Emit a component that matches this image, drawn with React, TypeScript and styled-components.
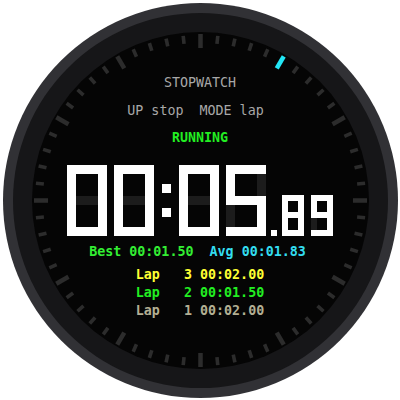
import React from 'react';
import styled, { createGlobalStyle } from 'styled-components';

const GlobalStyle = createGlobalStyle`
  html, body {
    margin: 0;
    padding: 0;
    background: #ffffff;
  }
  body {
    font-family: "DejaVu Sans Mono", "Liberation Mono", monospace;
  }
`;

const SEGMENTS: Record<string, string> = {
  '0': 'abcdef',
  '1': 'bc',
  '2': 'abdeg',
  '3': 'abcdg',
  '4': 'bcfg',
  '5': 'acdfg',
  '6': 'acdefg',
  '7': 'abc',
  '8': 'abcdefg',
  '9': 'abcdfg'
};

// each cell of the 3x5 grid lights when one of its segments is on
const CELLS = [
  'af', 'a', 'ab',
  'f', '', 'b',
  'efg', 'g', 'bcg',
  'e', '', 'c',
  'de', 'd', 'cd'
];

const laps = [
  { n: 3, time: '00:02.00', color: '#ffff33' },
  { n: 2, time: '00:01.50', color: '#22ee22' },
  { n: 1, time: '00:02.00', color: '#b3af93' }
];

const Screen = styled.div`
  width: 400px;
  height: 400px;
  display: flex;
  align-items: center;
  justify-content: center;
`;

const Bezel = styled.div`
  width: 395px;
  height: 395px;
  box-sizing: border-box;
  border-radius: 50%;
  background: #313135;
  padding: 10px;
  display: flex;
`;

const Ring = styled.div`
  flex: 1;
  border-radius: 50%;
  background: #161618;
  padding: 19px;
  display: flex;
`;

const Face = styled.div`
  flex: 1;
  position: relative;
  border-radius: 50%;
  background: #050505;
  display: flex;
  flex-direction: column;
  align-items: center;
  padding-top: 43px;
  box-sizing: border-box;
`;

const Dial = styled.svg`
  position: absolute;
  inset: 0;
  width: 100%;
  height: 100%;
`;

const Line = styled.div<{ $color: string; $bold?: boolean; $shift?: number; $gap?: number }>`
  position: relative;
  font-size: 13.33px;
  line-height: 16px;
  height: 16px;
  white-space: pre;
  color: ${(p) => p.$color};
  font-weight: ${(p) => (p.$bold ? 700 : 400)};
  margin-top: ${(p) => p.$gap ?? 0}px;
  padding-right: ${(p) => p.$shift ?? 0}px;
`;

const LapList = styled.div`
  position: relative;
  display: flex;
  flex-direction: column;
  align-items: center;
  margin-top: 6px;
`;

const LapRow = styled.div<{ $color: string }>`
  font-size: 13.33px;
  line-height: 18px;
  height: 18px;
  white-space: pre;
  font-weight: 700;
  color: ${(p) => p.$color};
`;

const Span = styled.span<{ $color: string }>`
  color: ${(p) => p.$color};
`;

const Readout = styled.div`
  position: relative;
  display: flex;
  align-items: flex-end;
  height: 71px;
  margin-top: 19px;
  margin-bottom: 8px;
`;

const DigitGrid = styled.div<{ $w: number; $h: number; $t: number; $gap: number }>`
  display: grid;
  width: ${(p) => p.$w}px;
  height: ${(p) => p.$h}px;
  grid-template-columns: ${(p) => `${p.$t}px 1fr ${p.$t}px`};
  grid-template-rows: ${(p) => `${p.$t}px 1fr ${p.$t}px 1fr ${p.$t}px`};
  margin-left: ${(p) => p.$gap}px;
`;

const Cell = styled.div<{ $state: 'on' | 'off' | 'none' }>`
  background: ${(p) => (p.$state === 'on' ? '#ffffff' : p.$state === 'off' ? '#1c1c1c' : 'transparent')};
`;

const Colon = styled.div`
  display: flex;
  flex-direction: column;
  align-self: stretch;
  margin-left: 8px;
  padding-top: 19px;
  gap: 15px;
`;

const Dot = styled.div<{ $size: number; $gap?: number }>`
  width: ${(p) => p.$size}px;
  height: ${(p) => p.$size}px;
  background: #ffffff;
  margin-left: ${(p) => p.$gap ?? 0}px;
`;

type DigitProps = { ch: string; w: number; h: number; t: number; gap?: number };

const Digit = ({ ch, w, h, t, gap = 0 }: DigitProps) => {
  const on = SEGMENTS[ch] ?? '';
  return (
    <DigitGrid $w={w} $h={h} $t={t} $gap={gap} aria-hidden="true">
      {CELLS.map((segs, i) => {
        const state = segs === '' ? 'none' : segs.split('').some((s) => on.includes(s)) ? 'on' : 'off';
        return <Cell key={i} $state={state} />;
      })}
    </DigitGrid>
  );
};

const Ticks = () => {
  const c = 168;
  const ticks = [];
  for (let i = 0; i < 60; i++) {
    const major = i % 5 === 0;
    const a = (i * 6 * Math.PI) / 180;
    const r1 = major ? 152 : 157;
    const r2 = major ? 166 : 165;
    const sx = Math.sin(a);
    const sy = -Math.cos(a);
    ticks.push(
      <line
        key={i}
        x1={c + sx * r1}
        y1={c + sy * r1}
        x2={c + sx * r2}
        y2={c + sy * r2}
        stroke={i === 5 ? '#22e6f5' : '#2c2c2c'}
        strokeWidth={major ? 4.5 : 3.6}
      />
    );
  }
  return (
    <Dial viewBox="0 0 336 336" aria-hidden="true">
      {ticks}
    </Dial>
  );
};

const App = () => {
  const big = { w: 40, h: 71, t: 9 };
  const small = { w: 22, h: 41, t: 6 };
  return (
    <>
      <GlobalStyle />
      <Screen>
        <Bezel>
          <Ring>
            <Face>
              <Ticks />
              <Line $color="#a8a8a8">STOPWATCH</Line>
              <Line $color="#a8a8a8" $gap={12} $shift={9}>
                UP stop  MODE lap
              </Line>
              <Line $color="#22ee22" $bold $gap={11}>
                RUNNING
              </Line>
              <Readout role="timer" aria-label="00:05.89">
                <Digit ch="0" {...big} />
                <Digit ch="0" {...big} gap={7} />
                <Colon>
                  <Dot $size={9} />
                  <Dot $size={9} />
                </Colon>
                <Digit ch="0" {...big} gap={8} />
                <Digit ch="5" {...big} gap={7} />
                <Dot $size={6} $gap={5} />
                <Digit ch="8" {...small} gap={5} />
                <Digit ch="9" {...small} gap={7} />
              </Readout>
              <Line $color="#33ee33" $bold $shift={5}>
                Best 00:01.50  <Span $color="#33ddf0">Avg 00:01.83</Span>
              </Line>
              <LapList>
                {laps.map((lap) => (
                  <LapRow key={lap.n} $color={lap.color}>
                    {`Lap   ${lap.n} ${lap.time}`}
                  </LapRow>
                ))}
              </LapList>
            </Face>
          </Ring>
        </Bezel>
      </Screen>
    </>
  );
};

export default App;
